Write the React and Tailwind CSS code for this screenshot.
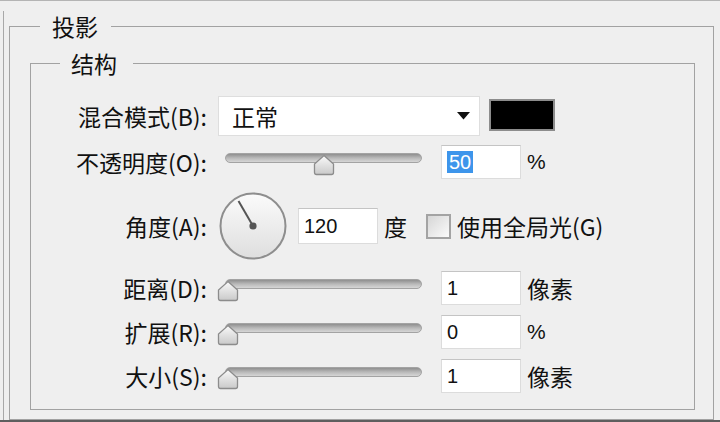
import React from "react";

const cjk = "font-['Noto_Sans_CJK_SC','Liberation_Sans',sans-serif]";

function Thumb({ left }) {
  return (
    <svg
      className="absolute top-[1px]"
      style={{ left }}
      width="22"
      height="22"
      viewBox="0 0 22 22"
    >
      <defs>
        <linearGradient id="tg" x1="0" y1="0" x2="0" y2="1">
          <stop offset="0" stopColor="#fafafa" />
          <stop offset="1" stopColor="#c9c9c9" />
        </linearGradient>
      </defs>
      <path
        d="M11 1.5 L20.5 10 L20.5 18.5 Q20.5 20.5 18.5 20.5 L3.5 20.5 Q1.5 20.5 1.5 18.5 L1.5 10 Z"
        fill="url(#tg)"
        stroke="#8c8c8c"
        strokeWidth="1.3"
      />
    </svg>
  );
}

function Slider({ left }) {
  return (
    <div className="relative ml-[10px] w-[214px] h-[22px] self-start mt-[8px] shrink-0">
      <div className="absolute left-[8px] top-0 w-[197px] h-[10px] rounded-full border border-[#a3a3a3] bg-gradient-to-b from-[#8f8f8f] via-[#b9b9b9] to-[#d6d6d6]" />
      <Thumb left={left} />
    </div>
  );
}

function Input({ children, className = "" }) {
  return (
    <div
      className={
        "w-[80px] h-[34px] bg-white border border-[#dcdcdc] border-t-[#c4c4c4] flex items-center pl-[5px] text-[20px] text-[#111] font-['Liberation_Sans',sans-serif] shrink-0 " +
        className
      }
    >
      {children}
    </div>
  );
}

function Label({ children }) {
  return (
    <div className="w-[176px] shrink-0 text-right text-[23px] leading-[30px] text-[#111]">
      {children}
    </div>
  );
}

export default function App() {
  return (
    <div
      className={
        "w-[720px] h-[422px] bg-[#efefef] border-t border-[#b4b4b4] border-b-2 border-b-[#5e5e5e] overflow-hidden " +
        cjk
      }
    >
      <div className="ml-[3px] h-full border-l border-[#a8a8a8]">
        <fieldset className="ml-[5px] mt-[10px] w-[705px] h-[409px] border border-[#a2a2a2] p-0 m-0">
          <legend className="ml-[30px] pl-[12px] pr-[13px] text-[23px] leading-[30px] text-[#111]">
            投影
          </legend>
          <fieldset className="ml-[20px] mt-[7px] w-[665px] border border-[#a2a2a2] p-0">
            <legend className="ml-[29px] pl-[11px] pr-[16px] text-[23px] leading-[30px] text-[#111]">
              结构
            </legend>
            <div className="pt-[18px] pb-[16px] flex flex-col">
              {/* 混合模式 */}
              <div className="flex items-center h-[40px]">
                <Label>混合模式(B):</Label>
                <div className="ml-[11px] w-[262px] h-[40px] bg-white border border-[#dedede] flex items-center justify-between pl-[13px] pr-[9px]">
                  <span className="text-[23px] text-[#111]">正常</span>
                  <svg width="13" height="8" viewBox="0 0 13 8">
                    <path d="M0 0 H13 L6.5 7.5 Z" fill="#111" />
                  </svg>
                </div>
                <div className="ml-[9px] w-[66px] h-[32px] bg-black border-2 border-[#8c8c8c] -mt-[3px]" />
              </div>

              {/* 不透明度 */}
              <div className="flex items-center h-[34px] mt-[9px]">
                <Label>不透明度(O):</Label>
                <Slider left={96} />
                <Input className="ml-[10px]">
                  <span className="bg-[#3d95eb] text-white px-[2px] leading-[22px]">50</span>
                </Input>
                <span className="ml-[6px] text-[21px] text-[#111] font-['Liberation_Sans',sans-serif]">%</span>
              </div>

              {/* 角度 */}
              <div className="flex items-center h-[68px] mt-[13px]">
                <Label>角度(A):</Label>
                <svg className="ml-[12px] shrink-0" width="68" height="68" viewBox="0 0 68 68">
                  <defs>
                    <linearGradient id="dg" x1="0" y1="0" x2="0" y2="1">
                      <stop offset="0" stopColor="#fbfbfb" />
                      <stop offset="1" stopColor="#dedede" />
                    </linearGradient>
                  </defs>
                  <circle cx="34" cy="34" r="32.5" fill="url(#dg)" stroke="#8e8e8e" strokeWidth="2" />
                  <line x1="34" y1="34" x2="19.5" y2="9" stroke="#555" strokeWidth="2" />
                  <circle cx="34" cy="34" r="3.6" fill="#555" />
                </svg>
                <Input className="ml-[11px] h-[36px]">120</Input>
                <span className="ml-[6px] text-[23px] text-[#111]">度</span>
                <div className="ml-[19px] w-[25px] h-[25px] border-2 border-[#a3a3a3] bg-gradient-to-br from-[#d6d6d6] to-[#fbfbfb] shrink-0" />
                <span className="ml-[6px] text-[23px] text-[#111]">使用全局光(G)</span>
              </div>

              {/* 距离 */}
              <div className="flex items-center h-[34px] mt-[11px]">
                <Label>距离(D):</Label>
                <Slider left={0} />
                <Input className="ml-[10px]">1</Input>
                <span className="ml-[6px] text-[23px] text-[#111]">像素</span>
              </div>

              {/* 扩展 */}
              <div className="flex items-center h-[34px] mt-[10px]">
                <Label>扩展(R):</Label>
                <Slider left={0} />
                <Input className="ml-[10px]">0</Input>
                <span className="ml-[6px] text-[21px] text-[#111] font-['Liberation_Sans',sans-serif]">%</span>
              </div>

              {/* 大小 */}
              <div className="flex items-center h-[34px] mt-[10px]">
                <Label>大小(S):</Label>
                <Slider left={0} />
                <Input className="ml-[10px]">1</Input>
                <span className="ml-[6px] text-[23px] text-[#111]">像素</span>
              </div>
            </div>
          </fieldset>
        </fieldset>
      </div>
    </div>
  );
}
